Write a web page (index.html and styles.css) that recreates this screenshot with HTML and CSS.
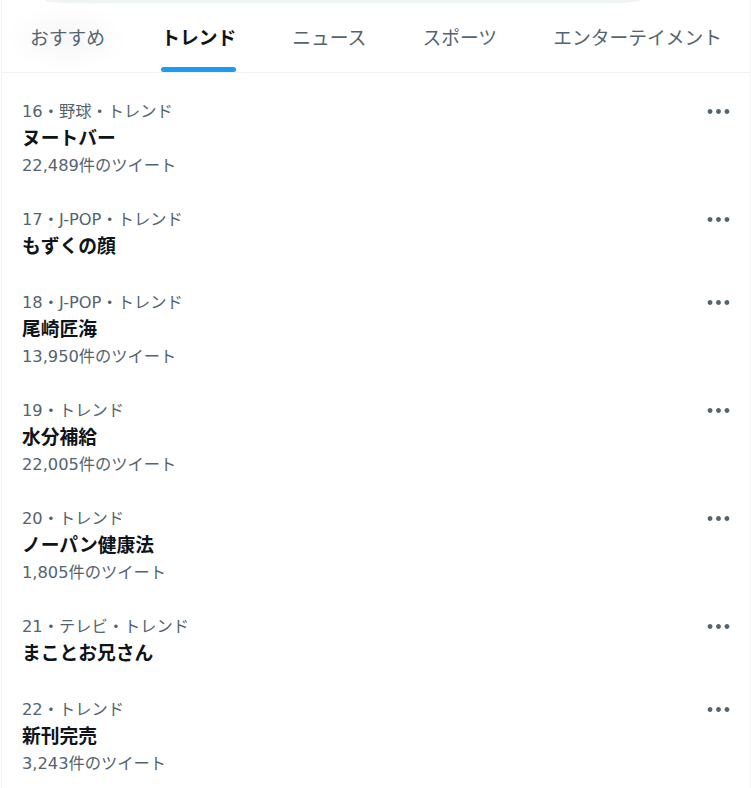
FILE: index.html
```html
<!DOCTYPE html>
<html lang="ja">
<head>
<meta charset="utf-8">
<title>トレンド</title>
<link rel="stylesheet" href="styles.css">
</head>
<body>
<div class="page">
  <div class="search-edge"></div>
  <nav class="tabs">
    <a class="tab tab-hover"><span class="tab-label">おすすめ</span></a>
    <a class="tab tab-active"><span class="tab-label">トレンド</span></a>
    <a class="tab"><span class="tab-label">ニュース</span></a>
    <a class="tab"><span class="tab-label">スポーツ</span></a>
    <a class="tab"><span class="tab-label">エンターテイメント</span></a>
  </nav>
  <section class="trends">
    <div class="trend">
      <div class="trend-body">
        <div class="trend-meta">16・野球・トレンド</div>
        <div class="trend-title">ヌートバー</div>
        <div class="trend-count">22,489件のツイート</div>
      </div>
      <svg class="more" viewBox="0 0 24 24"><path d="M3 12c0-1.1.9-2 2-2s2 .9 2 2-.9 2-2 2-2-.9-2-2zm9 2c1.1 0 2-.9 2-2s-.9-2-2-2-2 .9-2 2 .9 2 2 2zm7 0c1.1 0 2-.9 2-2s-.9-2-2-2-2 .9-2 2 .9 2 2 2z"/></svg>
    </div>
    <div class="trend">
      <div class="trend-body">
        <div class="trend-meta">17・J-POP・トレンド</div>
        <div class="trend-title">もずくの顔</div>
      </div>
      <svg class="more" viewBox="0 0 24 24"><path d="M3 12c0-1.1.9-2 2-2s2 .9 2 2-.9 2-2 2-2-.9-2-2zm9 2c1.1 0 2-.9 2-2s-.9-2-2-2-2 .9-2 2 .9 2 2 2zm7 0c1.1 0 2-.9 2-2s-.9-2-2-2-2 .9-2 2 .9 2 2 2z"/></svg>
    </div>
    <div class="trend">
      <div class="trend-body">
        <div class="trend-meta">18・J-POP・トレンド</div>
        <div class="trend-title">尾崎匠海</div>
        <div class="trend-count">13,950件のツイート</div>
      </div>
      <svg class="more" viewBox="0 0 24 24"><path d="M3 12c0-1.1.9-2 2-2s2 .9 2 2-.9 2-2 2-2-.9-2-2zm9 2c1.1 0 2-.9 2-2s-.9-2-2-2-2 .9-2 2 .9 2 2 2zm7 0c1.1 0 2-.9 2-2s-.9-2-2-2-2 .9-2 2 .9 2 2 2z"/></svg>
    </div>
    <div class="trend">
      <div class="trend-body">
        <div class="trend-meta">19・トレンド</div>
        <div class="trend-title">水分補給</div>
        <div class="trend-count">22,005件のツイート</div>
      </div>
      <svg class="more" viewBox="0 0 24 24"><path d="M3 12c0-1.1.9-2 2-2s2 .9 2 2-.9 2-2 2-2-.9-2-2zm9 2c1.1 0 2-.9 2-2s-.9-2-2-2-2 .9-2 2 .9 2 2 2zm7 0c1.1 0 2-.9 2-2s-.9-2-2-2-2 .9-2 2 .9 2 2 2z"/></svg>
    </div>
    <div class="trend">
      <div class="trend-body">
        <div class="trend-meta">20・トレンド</div>
        <div class="trend-title">ノーパン健康法</div>
        <div class="trend-count">1,805件のツイート</div>
      </div>
      <svg class="more" viewBox="0 0 24 24"><path d="M3 12c0-1.1.9-2 2-2s2 .9 2 2-.9 2-2 2-2-.9-2-2zm9 2c1.1 0 2-.9 2-2s-.9-2-2-2-2 .9-2 2 .9 2 2 2zm7 0c1.1 0 2-.9 2-2s-.9-2-2-2-2 .9-2 2 .9 2 2 2z"/></svg>
    </div>
    <div class="trend">
      <div class="trend-body">
        <div class="trend-meta">21・テレビ・トレンド</div>
        <div class="trend-title">まことお兄さん</div>
      </div>
      <svg class="more" viewBox="0 0 24 24"><path d="M3 12c0-1.1.9-2 2-2s2 .9 2 2-.9 2-2 2-2-.9-2-2zm9 2c1.1 0 2-.9 2-2s-.9-2-2-2-2 .9-2 2 .9 2 2 2zm7 0c1.1 0 2-.9 2-2s-.9-2-2-2-2 .9-2 2 .9 2 2 2z"/></svg>
    </div>
    <div class="trend">
      <div class="trend-body">
        <div class="trend-meta">22・トレンド</div>
        <div class="trend-title">新刊完売</div>
        <div class="trend-count">3,243件のツイート</div>
      </div>
      <svg class="more" viewBox="0 0 24 24"><path d="M3 12c0-1.1.9-2 2-2s2 .9 2 2-.9 2-2 2-2-.9-2-2zm9 2c1.1 0 2-.9 2-2s-.9-2-2-2-2 .9-2 2 .9 2 2 2zm7 0c1.1 0 2-.9 2-2s-.9-2-2-2-2 .9-2 2 .9 2 2 2z"/></svg>
    </div>
  </section>
</div>
</body>
</html>
```

FILE: styles.css
```css
* {
  box-sizing: border-box;
}

html, body {
  margin: 0;
  padding: 0;
  background: #ffffff;
}

body {
  font-family: "Noto Sans CJK JP", "Noto Sans", sans-serif;
  color: #0f1419;
  overflow: hidden;
}

.page {
  margin-left: 1px;
  width: 750px;
  min-height: 788px;
  border-left: 1px solid #eff3f4;
  border-right: 1px solid #eff3f4;
}

.search-edge {
  margin-left: 43px;
  width: 595px;
  height: 3px;
  background: #eff3f4;
  border-radius: 0 0 24px 24px / 0 0 3px 3px;
}

.tabs {
  display: flex;
  height: 70px;
  border-bottom: 1px solid #eff3f4;
}

.tab {
  flex: 1 1 auto;
  display: flex;
  justify-content: center;
  padding: 0 27px;
  font-size: 18.75px;
  color: #536471;
  cursor: pointer;
}

.tab-hover {
  background: radial-gradient(ellipse 62px 34px at 50% 50%, rgba(15, 20, 25, 0.035), rgba(15, 20, 25, 0));
}

.tab-label {
  position: relative;
  display: flex;
  align-items: center;
  height: 100%;
  padding-bottom: 2px;
  white-space: nowrap;
}

.tab-active {
  color: #0f1419;
  font-weight: 700;
}

.tab-active .tab-label::after {
  content: "";
  position: absolute;
  left: 0;
  right: 0;
  bottom: 0;
  height: 5px;
  border-radius: 9999px;
  background: #1d9bf0;
}

.trends {
  padding-top: 11px;
}

.trend {
  display: flex;
  align-items: flex-start;
  padding: 17px 17px 18px 20px;
}

.trend-body {
  flex: 1 1 auto;
  min-width: 0;
}

.trend-meta {
  font-family: "DejaVu Sans", "Noto Sans CJK JP", sans-serif;
  font-size: 16.25px;
  line-height: 21px;
  color: #536471;
}

.trend-title {
  margin-top: 2px;
  font-size: 18.75px;
  line-height: 25px;
  font-weight: 700;
  color: #0f1419;
}

.trend-count {
  margin-top: 9px;
  font-family: "DejaVu Sans", "Noto Sans CJK JP", sans-serif;
  font-size: 16.25px;
  line-height: 16px;
  color: #536471;
}

.more {
  flex: 0 0 auto;
  width: 29px;
  height: 29px;
  margin-top: -4px;
  fill: #536471;
}
```
